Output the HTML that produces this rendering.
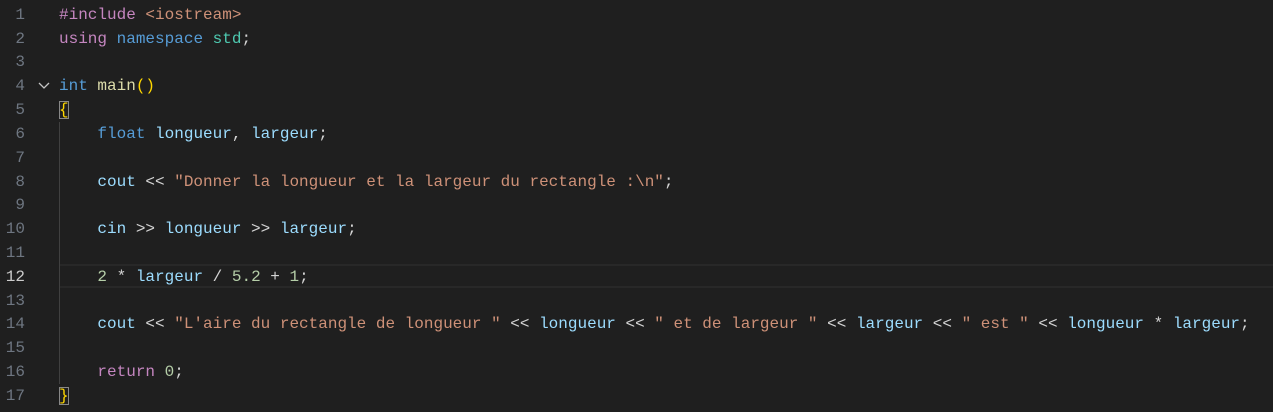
<!DOCTYPE html>
<html><head><meta charset="utf-8"><style>
html,body{margin:0;padding:0;background:#1f1f1f;width:1273px;height:412px;overflow:hidden}
.ed{position:relative;font-family:"Liberation Mono",monospace;font-size:16px;color:#d4d4d4}
.l{position:absolute;left:0;height:24px;line-height:24px;white-space:pre}
.n{position:absolute;left:0;width:25px;text-align:right;color:#6e7681}
.c{position:absolute;left:59px}
.k{color:#569cd6}.p{color:#c586c0}.s{color:#ce9178}.v{color:#9cdcfe}.f{color:#dcdcaa}.t{color:#4ec9b0}.m{color:#b5cea8}.b{color:#ffd700}
.bx{outline:1px solid #888;outline-offset:-1px}
.cur{position:absolute;left:59px;right:0;top:264px;height:20px;border-top:2px solid #282828;border-bottom:2px solid #282828}
.guide{position:absolute;left:59px;top:122px;width:1px;height:262px;background:#404040}
</style></head><body><div class="ed">
<div class="cur"></div><div class="guide"></div>
<div class="l" style="top:3px"><span class="n">1</span><span class="c"><span class="p">#include</span> <span class="s">&lt;iostream&gt;</span></span></div>
<div class="l" style="top:27px"><span class="n">2</span><span class="c"><span class="p">using</span> <span class="k">namespace</span> <span class="t">std</span>;</span></div>
<div class="l" style="top:50px"><span class="n">3</span></div>
<div class="l" style="top:74px"><span class="n">4</span><span style="position:absolute;left:37px;top:0"><svg width="14" height="24"><path d="M2 9 L7 14 L12 9" fill="none" stroke="#c5c5c5" stroke-width="1.3"/></svg></span><span class="c"><span class="k">int</span> <span class="f">main</span><span class="b">()</span></span></div>
<div class="l" style="top:98px"><span class="n">5</span><span class="c"><span class="b bx">{</span></span></div>
<div class="l" style="top:122px"><span class="n">6</span><span class="c">    <span class="k">float</span> <span class="v">longueur</span>, <span class="v">largeur</span>;</span></div>
<div class="l" style="top:146px"><span class="n">7</span></div>
<div class="l" style="top:170px"><span class="n">8</span><span class="c">    <span class="v">cout</span> &lt;&lt; <span class="s">"Donner la longueur et la largeur du rectangle :\n"</span>;</span></div>
<div class="l" style="top:193px"><span class="n">9</span></div>
<div class="l" style="top:217px"><span class="n">10</span><span class="c">    <span class="v">cin</span> &gt;&gt; <span class="v">longueur</span> &gt;&gt; <span class="v">largeur</span>;</span></div>
<div class="l" style="top:241px"><span class="n">11</span></div>
<div class="l" style="top:265px"><span class="n" style="color:#cccccc">12</span><span class="c">    <span class="m">2</span> * <span class="v">largeur</span> / <span class="m">5.2</span> + <span class="m">1</span>;</span></div>
<div class="l" style="top:289px"><span class="n">13</span></div>
<div class="l" style="top:312px"><span class="n">14</span><span class="c">    <span class="v">cout</span> &lt;&lt; <span class="s">"L'aire du rectangle de longueur "</span> &lt;&lt; <span class="v">longueur</span> &lt;&lt; <span class="s">" et de largeur "</span> &lt;&lt; <span class="v">largeur</span> &lt;&lt; <span class="s">" est "</span> &lt;&lt; <span class="v">longueur</span> * <span class="v">largeur</span>;</span></div>
<div class="l" style="top:336px"><span class="n">15</span></div>
<div class="l" style="top:360px"><span class="n">16</span><span class="c">    <span class="p">return</span> <span class="m">0</span>;</span></div>
<div class="l" style="top:384px"><span class="n">17</span><span class="c"><span class="b bx">}</span></span></div>
</div></body></html>
